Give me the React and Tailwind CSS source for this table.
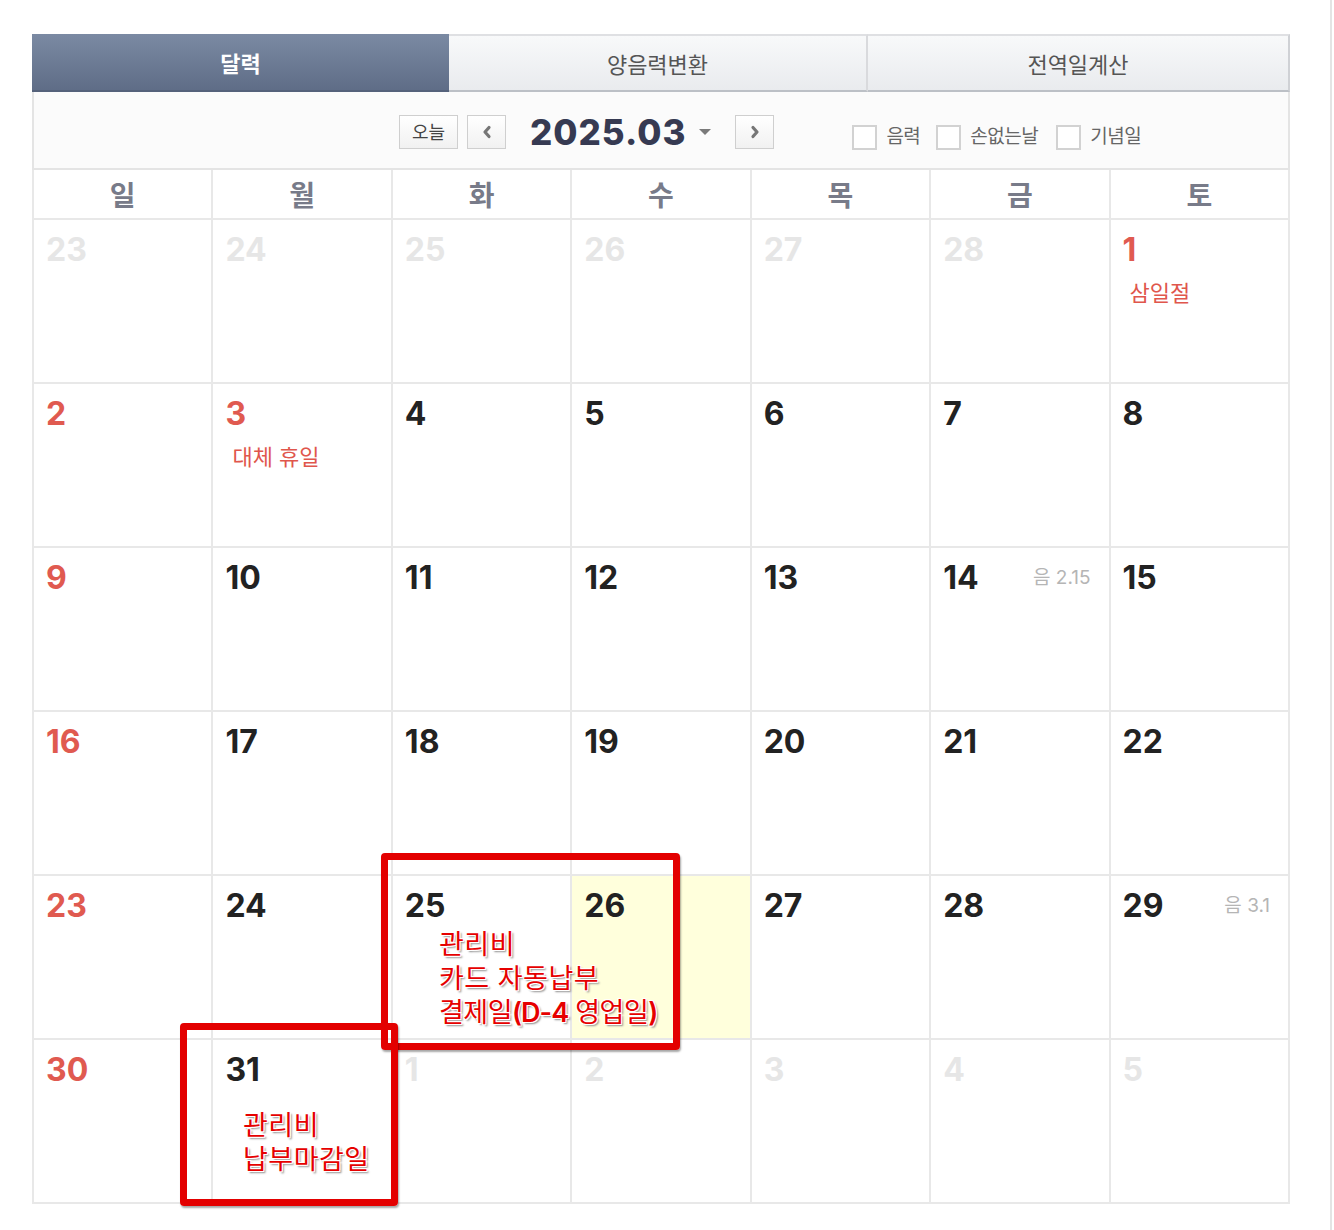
import React from "react";

const FONT = "font-['Inter','Noto_Sans_CJK_KR',sans-serif]";

const tabs = ["달력", "양음력변환", "전역일계산"];
const weekdays = ["일", "월", "화", "수", "목", "금", "토"];

// muted: other month, red: sunday / holiday
const weeks = [
  [
    { d: 23, muted: true }, { d: 24, muted: true }, { d: 25, muted: true }, { d: 26, muted: true },
    { d: 27, muted: true }, { d: 28, muted: true }, { d: 1, red: true, holiday: "삼일절" },
  ],
  [
    { d: 2, red: true }, { d: 3, red: true, holiday: "대체 휴일" }, { d: 4 }, { d: 5 }, { d: 6 }, { d: 7 }, { d: 8 },
  ],
  [
    { d: 9, red: true }, { d: 10 }, { d: 11 }, { d: 12 }, { d: 13 }, { d: 14, lunar: "2.15" }, { d: 15 },
  ],
  [
    { d: 16, red: true }, { d: 17 }, { d: 18 }, { d: 19 }, { d: 20 }, { d: 21 }, { d: 22 },
  ],
  [
    { d: 23, red: true }, { d: 24 }, { d: 25 }, { d: 26, today: true }, { d: 27 }, { d: 28 }, { d: 29, lunar: "3.1" },
  ],
  [
    { d: 30, red: true }, { d: 31 }, { d: 1, muted: true }, { d: 2, muted: true }, { d: 3, muted: true },
    { d: 4, muted: true }, { d: 5, muted: true },
  ],
];

const Tabs = () => (
  <div className="flex h-[58px]">
    <div className="w-[417px] flex items-center justify-center pt-[5px] bg-linear-to-b from-[#7b8aa3] to-[#5f6d87] border-b-2 border-[#55627b] text-white font-bold text-[22px]">
      {tabs[0]}
    </div>
    <div className="w-[419px] flex items-center justify-center pt-[5px] bg-linear-to-b from-[#f8f9fa] to-[#e9ebee] border-t-2 border-[#dfe0e3] border-b-2 border-b-[#bcc0c6] border-r-2 border-r-[#d9dadd] text-[#555] text-[22px]">
      {tabs[1]}
    </div>
    <div className="flex-1 flex items-center justify-center pt-[5px] bg-linear-to-b from-[#f8f9fa] to-[#e9ebee] border-t-2 border-[#dfe0e3] border-b-2 border-b-[#bcc0c6] border-r-2 border-r-[#cfd1d5] text-[#555] text-[22px]">
      {tabs[2]}
    </div>
  </div>
);

const NavButton = ({ children, className = "" }) => (
  <div className={`h-[34px] flex items-center justify-center bg-linear-to-b from-white to-[#f1f1f1] border border-[#cfcfcf] ${className}`}>
    {children}
  </div>
);

const Chevron = ({ dir }) => (
  <svg width="12" height="16" viewBox="0 0 12 16">
    <path
      d={dir === "left" ? "M8 3.5 L4 8 L8 12.5" : "M4 3.5 L8 8 L4 12.5"}
      fill="none"
      stroke="#767676"
      strokeWidth="3.2"
      strokeLinecap="round"
      strokeLinejoin="round"
    />
  </svg>
);

const Check = ({ label, className = "" }) => (
  <div className={`flex items-center ${className}`}>
    <div className="w-[25px] h-[25px] bg-white border-2 border-[#d2d2d2]" />
    <span className="ml-[9px] text-[19px] tracking-[-0.5px] text-[#666]">{label}</span>
  </div>
);

const Toolbar = () => (
  <div className="h-[78px] bg-[#fbfbfb] border-x-2 border-b-2 border-[#e4e4e4] flex items-center pl-[365px] pt-[4px]">
    <NavButton className="w-[59px] text-[18px] text-[#444]">오늘</NavButton>
    <NavButton className="w-[39px] ml-[9px]">
      <Chevron dir="left" />
    </NavButton>
    <div className="ml-[24px] flex items-center">
      <span className="text-[35px] font-extrabold tracking-[1px] text-[#363a52] leading-none">2025.03</span>
      <svg className="ml-[12px]" width="14" height="8" viewBox="0 0 14 8">
        <path d="M1 1 L13 1 L7 7 Z" fill="#7a7a7a" />
      </svg>
    </div>
    <NavButton className="w-[39px] ml-[23px]">
      <Chevron dir="right" />
    </NavButton>
    <div className="flex items-center mt-[10px] ml-[78px]">
      <Check label="음력" />
      <Check label="손없는날" className="ml-[16px]" />
      <Check label="기념일" className="ml-[18px]" />
    </div>
  </div>
);

const DayCell = ({ c }) => {
  const color = c.muted ? "text-[#e6e6e6]" : c.red ? "text-[#e05a50]" : "text-[#222]";
  return (
    <div className={`h-[164px] border-r-2 border-b-2 border-[#e8e8e8] pl-[12px] pr-[18px] pt-[14px] ${c.today ? "bg-[#ffffdc]" : "bg-white"}`}>
      <div className="flex items-center justify-between">
        <span className={`text-[32px] font-bold leading-none ${color}`}>{c.d}</span>
        {c.lunar && <span className="text-[19px] text-[#b5b5b5]">음 {c.lunar}</span>}
      </div>
      {c.holiday && <div className="mt-[12px] pl-[7px] text-[22px] text-[#e0564c] leading-[30px]">{c.holiday}</div>}
    </div>
  );
};

const Calendar = () => (
  <div className="border-l-2 border-[#e8e8e8] grid grid-cols-7">
    {weekdays.map((w) => (
      <div key={w} className="h-[50px] pt-[4px] border-r-2 border-b-2 border-[#e8e8e8] flex items-center justify-center text-[28px] font-bold text-[#787b89]">
        {w}
      </div>
    ))}
    {weeks.flat().map((c, i) => (
      <DayCell key={i} c={c} />
    ))}
  </div>
);

const note = "text-[#e60000] text-[27px] leading-[34px] tracking-[0.5px] [text-shadow:-1px_-1px_0_#fff,1px_-1px_0_#fff,-1px_1px_0_#fff,1px_1px_0_#fff,2px_2px_2px_#8a8a8a]";

export default function App() {
  return (
    <div className={`relative w-[1334px] h-[1230px] bg-white ${FONT}`}>
      <div className="w-[1332px] h-full border-r-2 border-[#e4e4e4] pt-[34px] pl-[32px]">
        <div className="w-[1258px]">
          <Tabs />
          <Toolbar />
          <Calendar />
        </div>
      </div>

      {/* annotations */}
      <div className="absolute left-[381px] top-[853px] w-[299px] h-[197px] border-[7px] border-[#e30000] rounded-[4px] shadow-[1px_2px_2px_rgba(0,0,0,0.35)]" />
      <div className="absolute left-[180px] top-[1023px] w-[218px] h-[183px] border-[7px] border-[#e30000] rounded-[4px] shadow-[1px_2px_2px_rgba(0,0,0,0.35)]" />
      <div className={`absolute left-[439px] top-[928px] ${note}`}>
        <div>관리비</div>
        <div>카드 자동납부</div>
        <div className="tracking-[-0.5px]">
          결제일<span className="font-semibold tracking-[-1px]">(D-4</span> 영업일<span className="font-semibold">)</span>
        </div>
      </div>
      <div className={`absolute left-[243px] top-[1109px] ${note}`}>
        <div>관리비</div>
        <div>납부마감일</div>
      </div>
    </div>
  );
}
